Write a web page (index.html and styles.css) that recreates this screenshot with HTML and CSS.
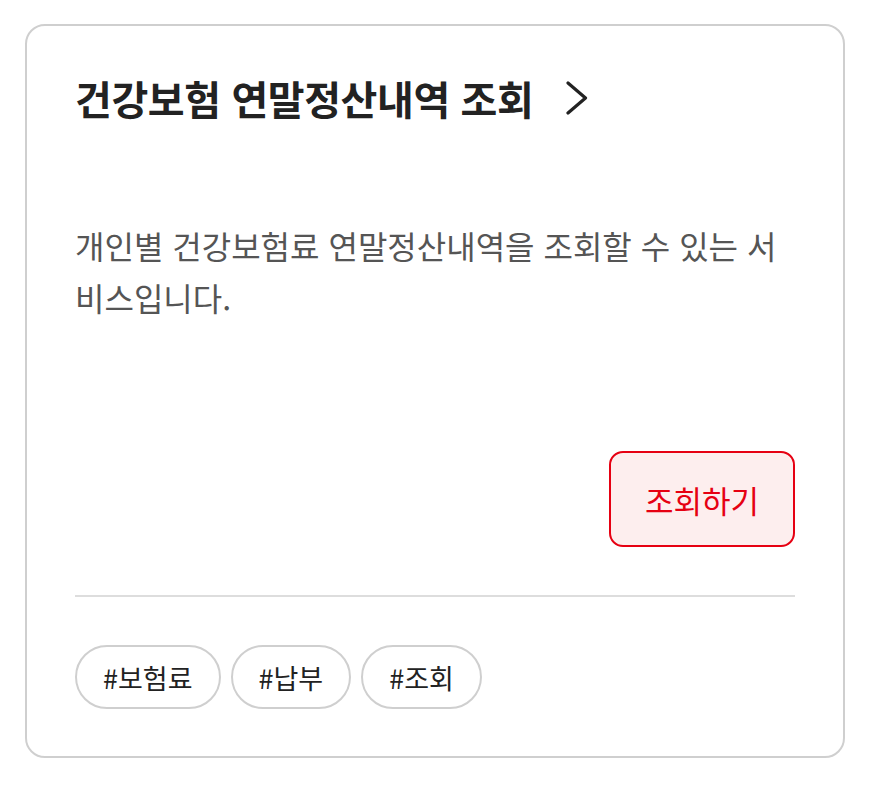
FILE: index.html
```html
<!DOCTYPE html>
<html lang="ko">
<head>
  <meta charset="UTF-8" />
  <meta name="viewport" content="width=device-width, initial-scale=1" />
  <title>건강보험 연말정산내역 조회</title>
  <link rel="stylesheet" href="styles.css">
</head>
<body>
  <div class="card">
    <a class="card-title" href="#">
      <span>건강보험 연말정산내역 조회</span>
      <svg class="chevron" width="24" height="34" viewBox="0 0 24 34" aria-hidden="true">
        <path d="M3 2 L20.5 17 L3 32" fill="none" stroke="#222" stroke-width="3.2" stroke-linecap="round" stroke-linejoin="round" />
      </svg>
    </a>

    <p class="card-desc">개인별 건강보험료 연말정산내역을 조회할 수 있는 서비스입니다.</p>

    <div class="card-actions">
      <button class="btn-primary" type="button">조회하기</button>
    </div>

    <hr class="divider" />

    <ul class="tags">
      <li class="tag">#보험료</li>
      <li class="tag">#납부</li>
      <li class="tag">#조회</li>
    </ul>
  </div>
</body>
</html>
```

FILE: styles.css
```css
body {
  margin: 0;
  padding: 24px 25px;
  background: #fff;
  font-family: "Noto Sans CJK KR", "Noto Sans", sans-serif;
}
.card {
  width: 820px;
  box-sizing: border-box;
  border: 2px solid #cfcfcf;
  border-radius: 20px;
  padding: 48px 48px 47px;
}
.card-title {
  display: flex;
  align-items: center;
  gap: 32px;
  height: 48px;
  color: #222;
  text-decoration: none;
  font-size: 40px;
  font-weight: 700;
  letter-spacing: -0.4px;
}
.chevron {
  display: block;
}
.card-desc {
  margin: 97px 0 0;
  font-size: 32px;
  line-height: 52px;
  color: #555;
}
.card-actions {
  display: flex;
  justify-content: flex-end;
  margin-top: 128px;
}
.btn-primary {
  width: 186px;
  height: 96px;
  border: 2px solid #e60012;
  border-radius: 14px;
  background: #fdeeee;
  color: #e60012;
  font-family: inherit;
  font-size: 31px;
  cursor: pointer;
}
.divider {
  margin: 48px 0;
  border: 0;
  border-top: 2px solid #ddd;
}
.tags {
  display: flex;
  gap: 10px;
  margin: 0;
  padding: 0;
  list-style: none;
}
.tag {
  height: 64px;
  box-sizing: border-box;
  padding: 0 26px;
  display: flex;
  align-items: center;
  border: 2px solid #cfcfcf;
  border-radius: 32px;
  font-size: 27px;
  color: #222;
}
```
